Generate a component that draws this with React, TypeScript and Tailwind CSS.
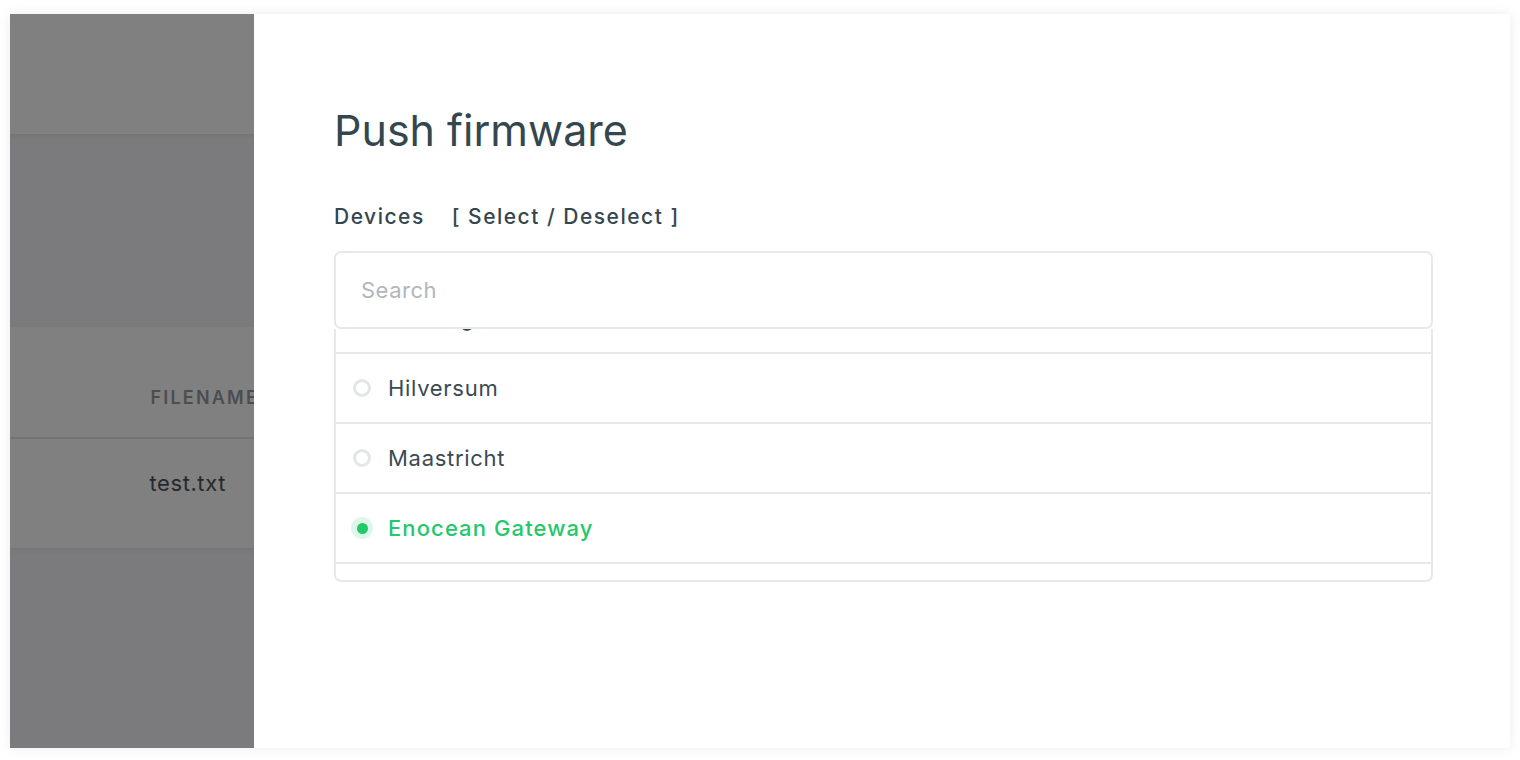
import React from "react";

const rows = [
  { name: "Vlissingen", selected: false },
  { name: "Hilversum", selected: false },
  { name: "Maastricht", selected: false },
  { name: "Enocean Gateway", selected: true },
  { name: "Rotterdam", selected: false },
];

function Radio({ on }: { on: boolean }) {
  if (on) {
    return (
      <span className="flex h-[22px] w-[22px] items-center justify-center rounded-full bg-[#2bcb70]/15">
        <span className="h-[11px] w-[11px] rounded-full bg-[#24c86a]" />
      </span>
    );
  }
  return (
    <span className="flex h-[22px] w-[22px] items-center justify-center">
      <span className="h-[18px] w-[18px] rounded-full border-[3px] border-[#e3e6e7]" />
    </span>
  );
}

export default function App() {
  return (
    <div className="h-[760px] w-[1520px] bg-white pt-[14px] pl-[10px] font-['Inter',sans-serif]">
      <div className="flex h-[734px] w-[1500px] overflow-hidden shadow-[0_0_12px_rgba(0,0,0,0.08)]">
        {/* dimmed page behind the drawer */}
        <aside className="flex w-[244px] flex-col bg-[#7b7b7d]">
          <div className="h-[120px] bg-[#808080] shadow-[0_2px_4px_rgba(0,0,0,0.06)]" />
          <div className="h-[193px]" />
          <div className="bg-[#808080] shadow-[0_2px_6px_rgba(0,0,0,0.06)]">
            <div className="flex h-[112px] items-end justify-end border-b-2 border-[#737374] pb-[26px]">
              <span className="-mr-[5px] text-[18px] font-semibold tracking-[2.2px] text-[#4a4e51]">FILENAME</span>
            </div>
            <div className="flex h-[109px] items-start justify-end pt-[28px] pr-[28px]">
              <span className="text-[22px] tracking-[0.6px] text-[#25292b]">test.txt</span>
            </div>
          </div>
        </aside>

        {/* drawer */}
        <main className="flex-1 bg-white pl-[80px] pt-[91px]">
          <h1 className="text-[43px] font-normal leading-[1.2] text-[#34474f]">Push firmware</h1>
          <div className="mt-[44px] flex items-center gap-[27px] text-[21px] font-medium tracking-[1.5px] text-[#35464e]">
            <span>Devices</span>
            <span>[ Select / Deselect ]</span>
          </div>

          <div className="mt-[19px] w-[1099px]">
            <div className="relative z-10 flex h-[78px] items-center rounded-[7px] border-2 border-[#e6e9e9] bg-white px-[25px]">
              <input
                placeholder="Search"
                className="w-full bg-transparent text-[22px] tracking-[0.5px] text-[#34474f] outline-none placeholder:text-[#b2b7ba]"
              />
            </div>
            <div className="h-[253px] overflow-hidden rounded-b-[7px] border-2 border-t-0 border-[#e6e9e9]">
              <div className="-mt-[45px]">
                {rows.map((r) => (
                  <div
                    key={r.name}
                    className="flex h-[70px] items-center gap-[15px] border-b-2 border-[#e6e9e9] pl-[15px]"
                  >
                    <Radio on={r.selected} />
                    <span
                      className={
                        r.selected
                          ? "text-[22px] font-medium tracking-[1.1px] text-[#24c86a]"
                          : "text-[22px] tracking-[0.7px] text-[#3b4a52]"
                      }
                    >
                      {r.name}
                    </span>
                  </div>
                ))}
              </div>
            </div>
          </div>
        </main>
      </div>
    </div>
  );
}
